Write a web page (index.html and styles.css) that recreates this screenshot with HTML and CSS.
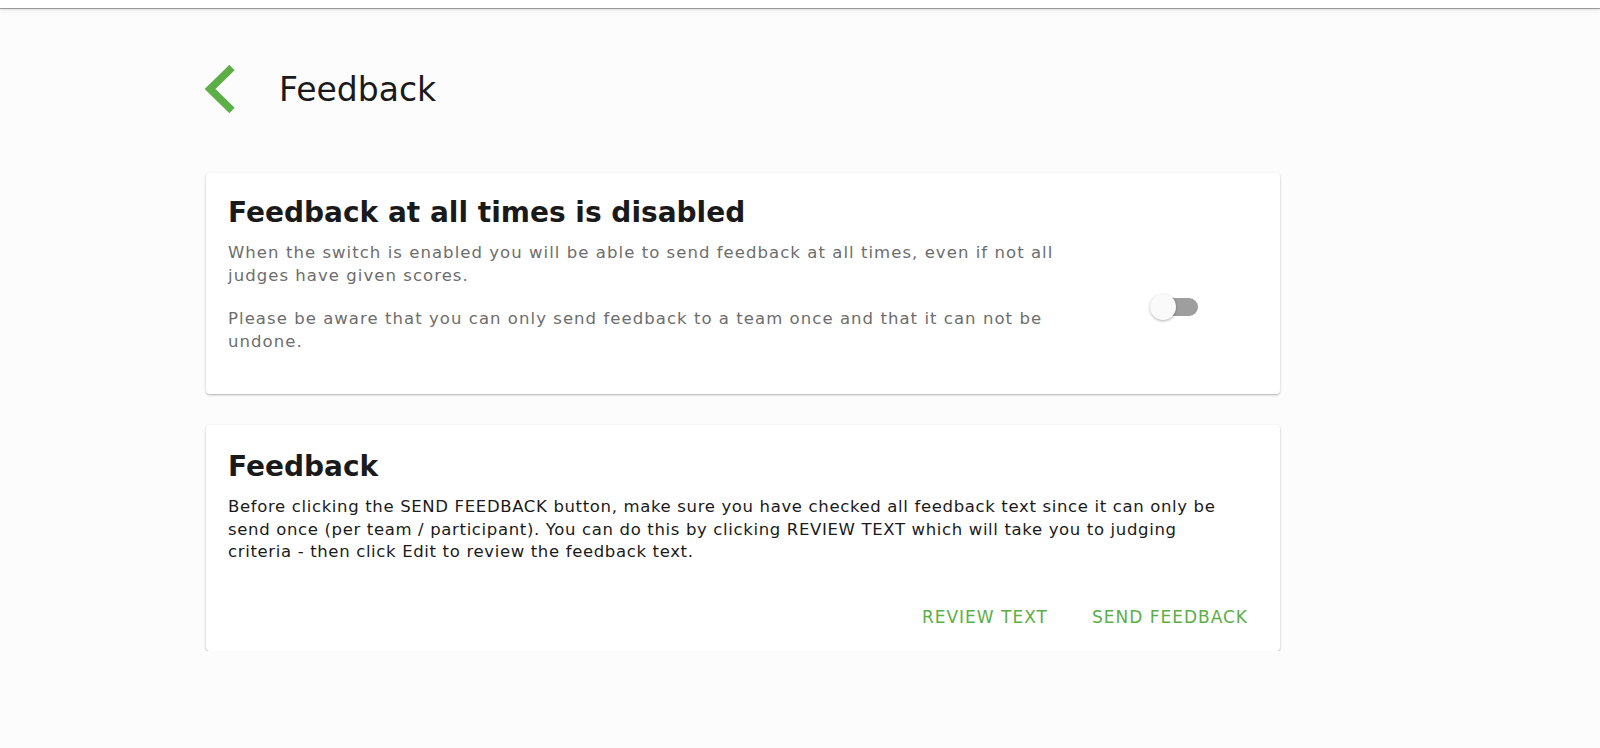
FILE: index.html
```html
<!DOCTYPE html>
<html lang="en">
<head>
  <meta charset="UTF-8" />
  <title>Feedback</title>
  <link rel="stylesheet" href="styles.css">
</head>
<body>
  <div class="topbar"></div>
  <main class="page">
    <div class="page-header">
      <a class="back" href="#" aria-label="Back">
        <svg width="32" height="48" viewBox="0 0 32 48">
          <path d="M29 2.5 L7 24 L29 45.5" fill="none" stroke="#5cae47" stroke-width="7.5"/>
        </svg>
      </a>
      <h1>Feedback</h1>
    </div>

    <section class="card card-switch">
      <div class="card-text">
        <h2>Feedback at all times is disabled</h2>
        <p class="muted">When the switch is enabled you will be able to send feedback at all times, even if not all judges have given scores.</p>
        <p class="muted">Please be aware that you can only send feedback to a team once and that it can not be undone.</p>
      </div>
      <label class="switch">
        <span class="track"></span>
        <span class="thumb"></span>
      </label>
    </section>

    <section class="card card-send">
      <h2>Feedback</h2>
      <p>Before clicking the SEND FEEDBACK button, make sure you have checked all feedback text since it can only be send once (per team / participant). You can do this by clicking REVIEW TEXT which will take you to judging criteria&nbsp;-&nbsp;then click Edit to review the feedback text.</p>
      <div class="actions">
        <button>Review text</button>
        <button>Send feedback</button>
      </div>
    </section>
  </main>
</body>
</html>
```

FILE: styles.css
```css
:root {
  --green: #5cae47;
  --bg: #fcfcfc;
  --text: #1a1a1a;
  --muted: #6d6d6d;
}
body {
  margin: 0;
  background: var(--bg);
  color: var(--text);
  font-family: 'DejaVu Sans', 'Open Sans', Arial, sans-serif;
}
.topbar {
  height: 8px;
  background: #fff;
  box-shadow: 0 1px 1px rgba(0,0,0,0.35), 0 2px 6px rgba(0,0,0,0.08);
}
.page {
  width: 1074px;
  margin-left: 206px;
}
.page-header {
  display: flex;
  align-items: center;
  height: 48px;
  margin-top: 57px;
}
.back {
  display: flex;
  width: 32px;
  margin-left: -3px;
}
.page-header h1 {
  margin: 0 0 0 44px;
  font-size: 33px;
  font-weight: 500;
}
.card {
  background: #fff;
  border-radius: 4px;
  box-shadow: 0 1px 3px rgba(0,0,0,0.2), 0 1px 1px rgba(0,0,0,0.12);
  padding: 23px 22px 19px 22px;
  margin-top: 60px;
}
.card + .card {
  margin-top: 31px;
}
.card-send {
  padding-top: 25px;
  padding-bottom: 16px;
}
.card-switch {
  display: flex;
  align-items: flex-start;
  padding-bottom: 41px;
}
.card-text {
  width: 845px;
}
.card h2 {
  margin: 0 0 12px;
  font-size: 28px;
  line-height: 34px;
  font-weight: 600;
}
.card p {
  margin: 0;
  font-size: 16.5px;
  line-height: 22.5px;
  letter-spacing: 0.65px;
}
.card p.muted {
  color: var(--muted);
  letter-spacing: 1.05px;
}
.card p.muted + p.muted {
  margin-top: 21px;
}
.switch {
  position: relative;
  width: 48px;
  height: 26px;
  margin: 98px 60px 0 auto;
}
.track {
  position: absolute;
  left: 4px;
  top: 4px;
  width: 44px;
  height: 18px;
  border-radius: 9px;
  background: #9e9e9e;
}
.thumb {
  position: absolute;
  left: 0;
  top: 0;
  width: 26px;
  height: 26px;
  border-radius: 50%;
  background: #fafafa;
  box-shadow: 0 1px 3px rgba(0,0,0,0.3);
}
.actions {
  display: flex;
  justify-content: flex-end;
  gap: 12px;
  margin: 35px -6px 0 0;
}
.actions button {
  background: none;
  border: none;
  color: var(--green);
  font-family: inherit;
  font-size: 17px;
  line-height: 20px;
  font-weight: 500;
  text-transform: uppercase;
  letter-spacing: 1px;
  padding: 8px 16px;
  cursor: pointer;
}
```
